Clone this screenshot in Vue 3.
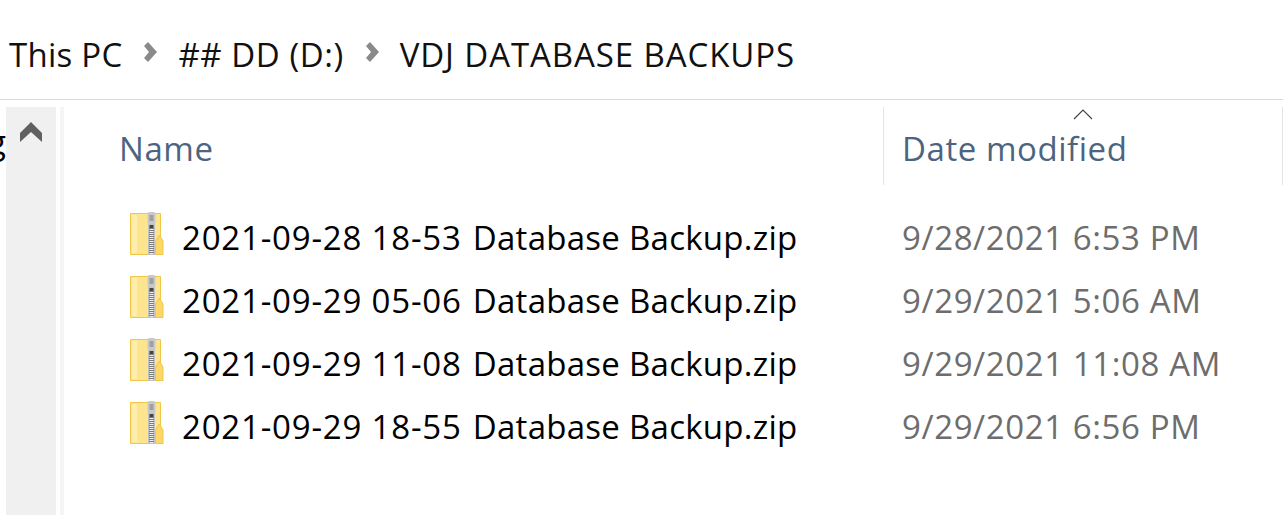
<script setup>
const rows = [
  { stamp: '2021-09-28 18-53', rest: 'Database Backup.zip', date: '9/28/2021 6:53 PM' },
  { stamp: '2021-09-29 05-06', rest: 'Database Backup.zip', date: '9/29/2021 5:06 AM' },
  { stamp: '2021-09-29 11-08', rest: 'Database Backup.zip', date: '9/29/2021 11:08 AM' },
  { stamp: '2021-09-29 18-55', rest: 'Database Backup.zip', date: '9/29/2021 6:56 PM' },
]
const crumbs = ['## DD (D:)', 'VDJ DATABASE BACKUPS']
const teeth = [0, 1, 2, 3, 4, 5, 6, 7, 8, 9, 10, 11, 12]
</script>

<template>
  <div class="window">
    <header class="crumbs">
      <span class="crumb first">This PC</span>
      <template v-for="c in crumbs" :key="c">
        <svg class="sep" width="14" height="20" viewBox="0 0 14 20">
          <path d="M1 4l4-4 9 10-9 10-4-4 5-6z" fill="#8a8a8a" />
        </svg>
        <span class="crumb">{{ c }}</span>
      </template>
    </header>
    <main class="body">
      <div class="clip"><span class="clip-g">g</span></div>
      <aside class="scroll">
        <svg class="up" width="22" height="20" viewBox="0 0 22 20">
          <path d="M11 0l11 11v9l-11-10L0 20v-9z" fill="#606060" />
        </svg>
      </aside>
      <div class="gutter"></div>
      <section class="list">
        <div class="head">
          <div class="col-name">Name</div>
          <div class="col-date">
            <svg class="sort" width="20" height="12" viewBox="0 0 20 12">
              <path d="M1 11l9-9 9 9" fill="none" stroke="#444" stroke-width="1.2" />
            </svg>
            Date modified
          </div>
        </div>
        <div class="rows">
          <div v-for="r in rows" :key="r.stamp" class="row">
            <svg class="zip" width="36" height="44" viewBox="0 0 36 44">
              <path d="M1.5 1.5h30v41h-30z" fill="#fde48e" stroke="#f0c846" />
              <path d="M3 3h5v38H3z" fill="#ffedab" />
              <path d="M26.5 42.5V29l4-6 3.5 6v13.5z" fill="#fdd868" stroke="#f0c846" />
              <rect x="19" y="1" width="7" height="42" fill="#c2c2c2" />
              <rect v-for="t in teeth" :key="t" x="20" :y="16 + t * 2" width="5" height="1" fill="#7d7d7d" />
              <rect v-for="t in teeth" :key="'l' + t" x="21" :y="17 + t * 2" width="3" height="1" fill="#efefef" />
              <rect x="18.5" y="0" width="8" height="12" rx="2" fill="#c8c8c8" />
              <rect x="20.5" y="3" width="4" height="6" fill="#a0a0a0" />
              <rect x="20.5" y="13" width="4" height="3" fill="#444" />
            </svg>
            <span class="file"><span class="stamp">{{ r.stamp }}</span> <span class="rest">{{ r.rest }}</span></span>
            <span class="date">{{ r.date }}</span>
          </div>
        </div>
      </section>
    </main>
  </div>
</template>

<style>
html, body { margin: 0; background: #fff; }
</style>

<style scoped>
.window {
  width: 1283px;
  height: 515px;
  overflow: hidden;
  background: #fff;
  font-family: "Open Sans", "Noto Sans", sans-serif;
  font-size: 33px;
  letter-spacing: 0.55px;
}
.crumbs {
  border-bottom: 1px solid #d9d9d9;
  display: flex;
  align-items: center;
  padding-left: 9px;
  padding-top: 10px;
  height: 89px;
  color: #111;
}
.crumb { white-space: nowrap; }
.crumb.first { letter-spacing: 0.25px; }
.crumb:last-child { letter-spacing: 0.9px; }
.sep { margin: -6px 21px 0; flex: none; }
.body {
  display: flex;
  height: 415px;
  padding-top: 7px;
  box-sizing: border-box;
}
.clip { width: 6px; overflow: hidden; flex: none; }
.clip-g { display: block; margin-left: -12px; color: #000; line-height: 70px; }
.scroll {
  width: 50px;
  flex: none;
  background: #f0f0f0;
  display: flex;
  justify-content: center;
  align-items: flex-start;
  padding-top: 15px;
  box-sizing: border-box;
}
.gutter { width: 4px; margin-left: 4px; background: #f5f5f5; flex: none; }
.list { flex: 1; min-width: 0; }
.head {
  display: flex;
  height: 78px;
  color: #4d6480;
}
.col-name {
  width: 820px;
  flex: none;
  padding-left: 55px;
  box-sizing: border-box;
  line-height: 84px;
  border-right: 1px solid #e5e5e5;
}
.col-date {
  flex: 1;
  position: relative;
  padding-left: 18px;
  line-height: 84px;
  border-right: 1px solid #e5e5e5;
}
.sort { position: absolute; left: 189px; top: 1px; }
.rows { padding-top: 22px; }
.row {
  display: flex;
  align-items: center;
  height: 63px;
  padding-left: 65px;
}
.zip { flex: none; margin-top: -10px; margin-right: 1px; }
.file {
  width: 737px;
  flex: none;
  padding-left: 16px;
  box-sizing: border-box;
  color: #000;
  white-space: nowrap;
  margin-top: -2px;
}
.stamp { letter-spacing: 0.8px; margin-right: 2px; }
.rest { letter-spacing: 0.27px; }
.date { color: #6d6d6d; white-space: nowrap; margin-top: -2px; margin-left: -1px; letter-spacing: 0.6px; }
</style>
